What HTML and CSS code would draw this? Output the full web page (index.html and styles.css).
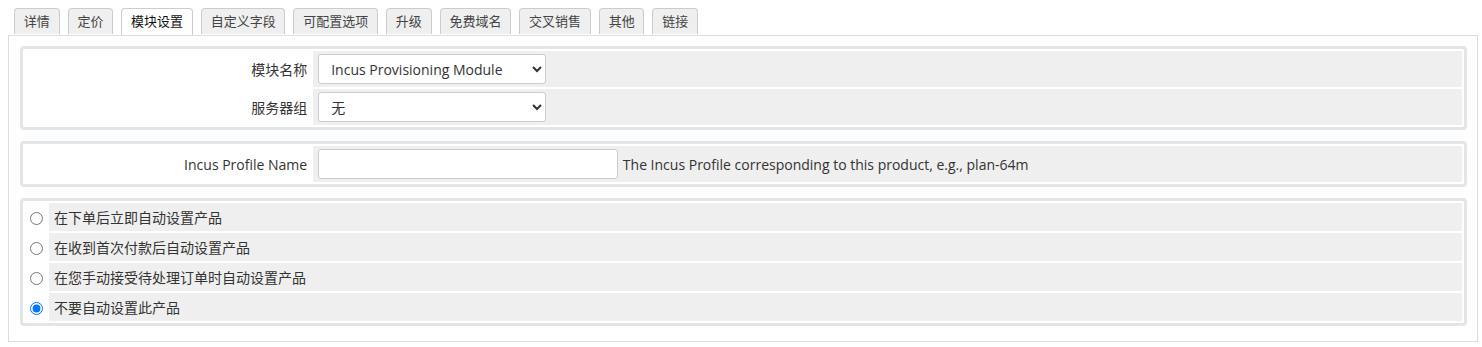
FILE: index.html
```html
<!DOCTYPE html>
<html lang="zh-CN">
<head>
    <meta charset="UTF-8">
    <title>模块设置</title>
    <link rel="stylesheet" href="styles.css">
</head>
<body>
    <ul class="tabs">
        <li class="tab">详情</li>
        <li class="tab">定价</li>
        <li class="tab active">模块设置</li>
        <li class="tab">自定义字段</li>
        <li class="tab">可配置选项</li>
        <li class="tab">升级</li>
        <li class="tab">免费域名</li>
        <li class="tab">交叉销售</li>
        <li class="tab">其他</li>
        <li class="tab">链接</li>
    </ul>

    <div class="tab-panel">
        <table class="form-table">
            <tr>
                <td class="field-label">模块名称</td>
                <td class="field-area">
                    <select class="form-select">
                        <option>Incus Provisioning Module</option>
                    </select>
                </td>
            </tr>
            <tr>
                <td class="field-label">服务器组</td>
                <td class="field-area">
                    <select class="form-select">
                        <option>无</option>
                    </select>
                </td>
            </tr>
        </table>

        <table class="form-table">
            <tr>
                <td class="field-label">Incus Profile Name</td>
                <td class="field-area">
                    <input type="text" class="form-input">
                    <span class="help">The Incus Profile corresponding to this product, e.g., plan-64m</span>
                </td>
            </tr>
        </table>

        <table class="form-table radio-table">
            <tr>
                <td class="radio-cell"><input type="radio" name="autosetup"></td>
                <td class="field-area">在下单后立即自动设置产品</td>
            </tr>
            <tr>
                <td class="radio-cell"><input type="radio" name="autosetup"></td>
                <td class="field-area">在收到首次付款后自动设置产品</td>
            </tr>
            <tr>
                <td class="radio-cell"><input type="radio" name="autosetup"></td>
                <td class="field-area">在您手动接受待处理订单时自动设置产品</td>
            </tr>
            <tr>
                <td class="radio-cell"><input type="radio" name="autosetup" checked></td>
                <td class="field-area">不要自动设置此产品</td>
            </tr>
        </table>
    </div>
</body>
</html>
```

FILE: styles.css
```css
body {
    margin: 8px 4px 8px 8px;
    font-family: "Open Sans", "Noto Sans CJK SC", sans-serif;
    font-size: 14px;
    color: #333;
    background: #fff;
}

.tabs {
    display: flex;
    gap: 8px;
    list-style: none;
    margin: 0;
    padding: 0 0 0 6px;
    font-size: 13px;
}

.tab {
    position: relative;
    height: 25px;
    line-height: 25px;
    padding: 0 8.8px;
    border: 1px solid #ccc;
    border-bottom: none;
    border-radius: 4px 4px 0 0;
    background-color: #efefef;
    color: #444;
    z-index: 1;
}

.tab.active {
    background-color: #fff;
    height: 26px;
    color: #111;
}

.tab-panel {
    border: 1px solid #ddd;
    padding: 10px 10px 15px 11px;
}

.form-table {
    width: 100%;
    border: 3px solid #e3e6e9;
    border-radius: 4px;
    border-spacing: 1px 2px;
    padding: 0 1px;
    margin-bottom: 11px;
}

.form-table:last-child {
    margin-bottom: 0;
}

.form-table td {
    padding: 3px 5px;
    height: 30px;
}

.field-label {
    width: 20%;
    text-align: right;
    background-color: #fff;
    white-space: nowrap;
}

.field-area {
    background-color: #efefef;
}

.form-select {
    width: 228px;
    height: 30px;
    padding: 0 8px;
    border: 1px solid #ccc;
    border-radius: 3px;
    background-color: #fff;
    font-family: inherit;
    font-size: 14px;
    color: #333;
}

.form-input {
    width: 300px;
    height: 30px;
    box-sizing: border-box;
    padding: 0 8px;
    border: 1px solid #ccc;
    border-radius: 3px;
    font-family: inherit;
    font-size: 14px;
    vertical-align: middle;
}

.help {
    margin-left: 1px;
    vertical-align: middle;
}

.radio-table td {
    height: 22px;
}

.radio-table .radio-cell {
    width: 14px;
    background-color: #fff;
    text-align: center;
    padding: 3px 5px 3px 4px;
}

.radio-cell input {
    margin: 0;
    vertical-align: middle;
}
```
